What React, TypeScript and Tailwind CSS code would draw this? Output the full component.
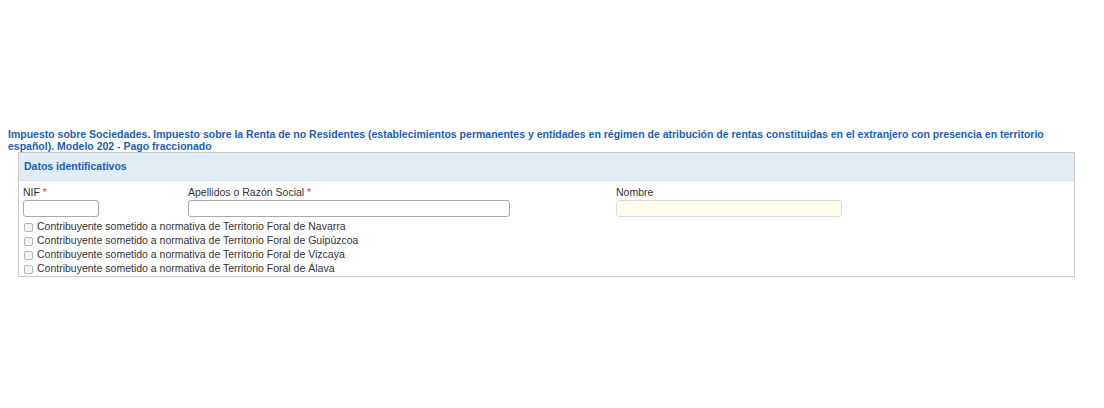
const forales = ['Navarra', 'Guipúzcoa', 'Vizcaya', 'Álava'];

export default function App() {
  return (
    <div className="min-h-[408px] bg-white pt-[128px] font-['Liberation_Sans',Arial,sans-serif] text-[10.5px] text-[#333]">
      <h1 className="mr-[30px] pl-2 text-[10.5px] font-bold leading-[12px] text-[#1c5fb0]">
        Impuesto sobre Sociedades. Impuesto sobre la Renta de no Residentes (establecimientos permanentes y entidades en régimen de atribución de rentas constituidas en el extranjero con presencia en territorio español). Modelo 202 - Pago fraccionado
      </h1>
      <div className="ml-[18px] w-[1057px] border border-[#c9c9c9]">
        <div className="flex h-[28px] items-center border-b border-[#d3dfe8] bg-[#e1edf5] px-[5px] font-bold text-[#1c5fb0]">
          Datos identificativos
        </div>
        <div className="px-1 pb-0 pt-[4px]">
          <div className="flex">
            <div className="w-[165px]">
              <label className="block leading-[14px]">
                NIF <span className="text-[#e03b3b]">*</span>
              </label>
              <input className="mt-px h-[17px] w-[76px] rounded-[3px] border border-[#a9a9a9] bg-white" />
            </div>
            <div className="w-[428px]">
              <label className="block leading-[14px]">
                Apellidos o Razón Social <span className="text-[#e03b3b]">*</span>
              </label>
              <input className="mt-px h-[17px] w-[322px] rounded-[3px] border border-[#a9a9a9] bg-white" />
            </div>
            <div>
              <label className="block leading-[14px]">Nombre</label>
              <input className="mt-px h-[17px] w-[226px] rounded-[3px] border border-[#dcdcdc] bg-[#fffde9]" />
            </div>
          </div>
          <div className="mt-[3px]">
            {forales.map((f) => (
              <label key={f} className="flex h-[14px] items-center">
                <span className="ml-[1px] mr-[4px] inline-block h-[9px] w-[9px] rounded-[2px] border border-[#b5b5b5] bg-[#f3f3f3]"></span>
                Contribuyente sometido a normativa de Territorio Foral de {f}
              </label>
            ))}
          </div>
        </div>
      </div>
    </div>
  );
}
